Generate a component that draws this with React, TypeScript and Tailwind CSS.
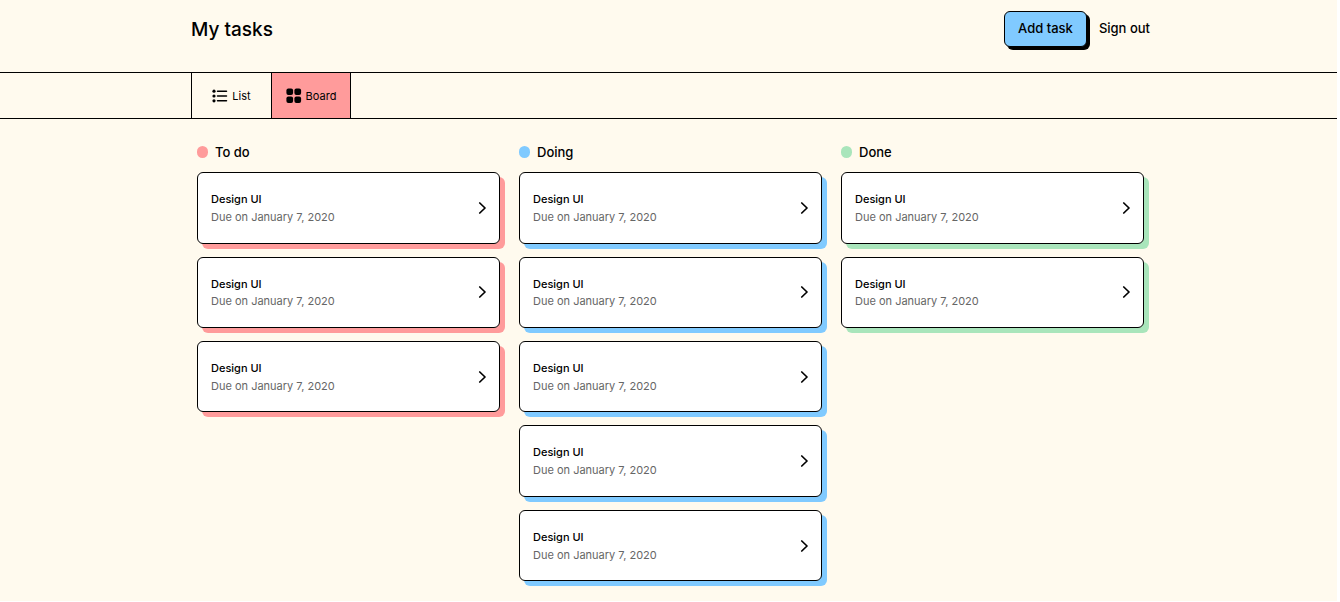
import React from "react";

type Column = { title: string; dot: string; shadow: string; count: number };

const columns: Column[] = [
  { title: "To do", dot: "bg-[#ff9b9b]", shadow: "shadow-[5px_5px_0_0_#ff9b9b]", count: 3 },
  { title: "Doing", dot: "bg-[#80caff]", shadow: "shadow-[5px_5px_0_0_#80caff]", count: 5 },
  { title: "Done", dot: "bg-[#a9e5bb]", shadow: "shadow-[5px_5px_0_0_#a9e5bb]", count: 2 },
];

function ListIcon() {
  return (
    <svg viewBox="0 0 16 16" className="size-4" aria-hidden="true">
      <circle cx="2" cy="3.2" r="1.6" />
      <circle cx="2" cy="8" r="1.6" />
      <circle cx="2" cy="12.8" r="1.6" />
      <path d="M5.5 3.2h9M5.5 8h9M5.5 12.8h9" stroke="black" strokeWidth="1.5" strokeLinecap="round" />
    </svg>
  );
}

function BoardIcon() {
  return (
    <svg viewBox="0 0 16 16" className="size-4" aria-hidden="true">
      <rect x="0.4" y="0.4" width="6.7" height="6.7" rx="2" />
      <rect x="8.4" y="0.4" width="6.7" height="6.7" rx="2" />
      <rect x="0.4" y="8.4" width="6.7" height="6.7" rx="2" />
      <rect x="8.4" y="8.4" width="6.7" height="6.7" rx="2" />
    </svg>
  );
}

function TaskCard({ shadow }: { shadow: string }) {
  return (
    <li>
      <a
        href="#task"
        className={`flex items-center justify-between rounded-md border border-black bg-white px-[13px] py-4 text-[11px] leading-[1.61] ${shadow}`}
      >
        <span className="pt-[2px]">
          <span className="block font-medium">Design UI</span>
          <span className="block text-[#666666]">Due on January 7, 2020</span>
        </span>
        <svg viewBox="0 0 8 12" className="h-3 w-2" fill="none" stroke="black" strokeWidth="1.7" aria-hidden="true">
          <path d="M1.8 1 7 6 1.8 11" strokeLinecap="round" strokeLinejoin="round" />
        </svg>
      </a>
    </li>
  );
}

export default function App() {
  return (
    <div className="flex min-h-screen flex-col border-r-[3px] border-b border-white bg-[#fffaee] font-['Inter',sans-serif] text-black">
      <div className="pl-[5px]">
        <header className="mx-auto flex h-[72px] max-w-[960px] items-start justify-between pt-[11px] pr-px">
          <h1 className="pt-[5px] text-[19px] leading-7 font-medium">My tasks</h1>
          <div className="flex items-center gap-3 text-[13px] font-medium">
            <button className="h-9 rounded-md border border-black bg-[#80caff] px-[13px] shadow-[3px_3px_0_0_#000]">
              Add task
            </button>
            <button>Sign out</button>
          </div>
        </header>
      </div>
      <nav className="border-y border-black pl-[5px]">
        <div className="mx-auto flex h-[45px] max-w-[960px] text-[11px]">
          <a href="#list" className="flex w-20 items-center justify-center gap-1 border-l border-black">
            <ListIcon />
            <span className="pt-[2px]">List</span>
          </a>
          <a href="#board" className="flex w-20 items-center justify-center gap-1 border-x border-black bg-[#ff9b9b]">
            <BoardIcon />
            <span className="pt-[2px]">Board</span>
          </a>
        </div>
      </nav>
      <div className="pl-[5px]">
        <main className="mx-auto grid max-w-[960px] grid-cols-3 gap-[19px] pt-6 pr-[7px] pl-[6px]">
          {columns.map((column) => (
            <section key={column.title}>
              <h2 className="flex items-center gap-[7px] text-[13px] leading-[1.4] font-medium">
                <span className={`h-3 w-[11px] rounded-full ${column.dot}`} />
                {column.title}
              </h2>
              <ul className="mt-[11px] flex flex-col gap-[13px]">
                {Array.from({ length: column.count }, (_, i) => (
                  <TaskCard key={i} shadow={column.shadow} />
                ))}
              </ul>
            </section>
          ))}
        </main>
      </div>
    </div>
  );
}
